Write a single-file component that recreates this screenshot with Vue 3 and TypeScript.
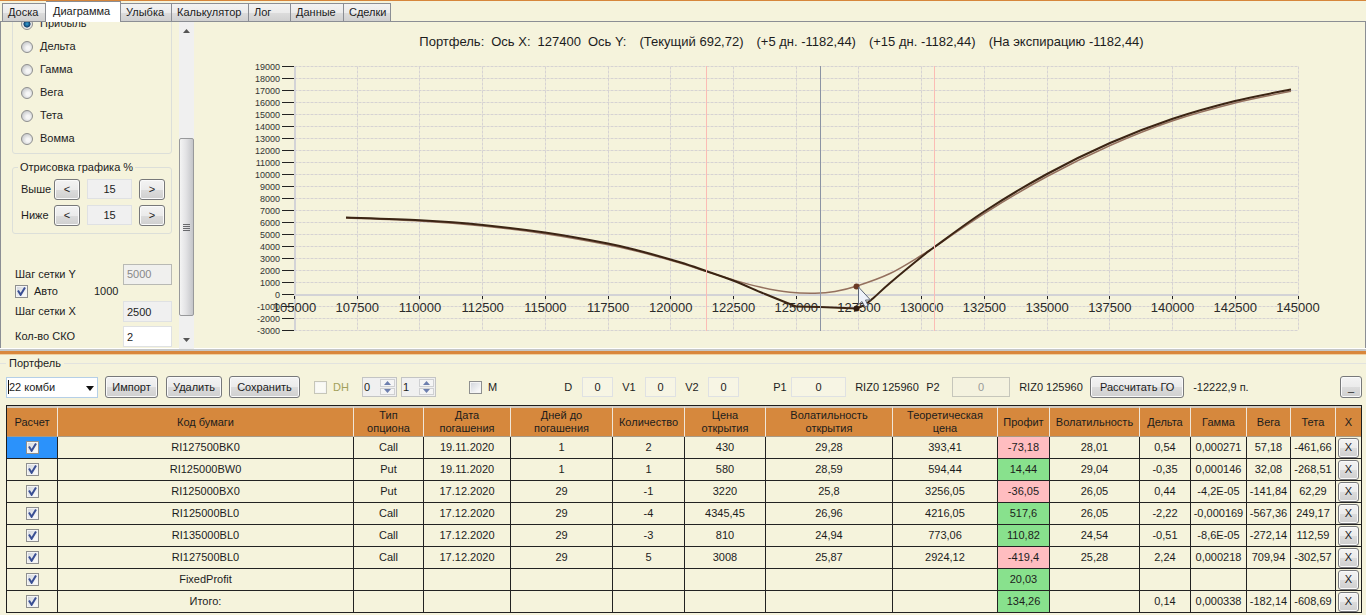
<script setup lang="ts">
import { ref } from 'vue'

type Point = [number, number]

interface Row {
  on: boolean
  code: string
  cells: string[]
}

const tabs = [
  { name: 'Доска', width: 44 },
  { name: 'Диаграмма', width: 75 },
  { name: 'Улыбка', width: 51 },
  { name: 'Калькулятор', width: 77 },
  { name: 'Лог', width: 42 },
  { name: 'Данные', width: 53 },
  { name: 'Сделки', width: 47 },
]
const activeTab = ref('Диаграмма')

const metrics = ['Прибыль', 'Дельта', 'Гамма', 'Вега', 'Тета', 'Вомма']
const metric = ref('Прибыль')
const ranges = [
  { id: 'above', name: 'Выше', value: '15' },
  { id: 'below', name: 'Ниже', value: '15' },
]
const auto = ref(true)
const hedge = ref(false)
const mFlag = ref(false)

const title = ['Портфель:', 'Ось X:', '127400', 'Ось Y:']
const titleValues = ['(Текущий 692,72)', '(+5 дн. -1182,44)', '(+15 дн. -1182,44)', '(На экспирацию -1182,44)']

const left = 294.5
const zeroY = 294.5
const px = (v: number) => left + ((v - 105000) / 40000) * 1003.5
const py = (v: number) => zeroY - (v / 1000) * 12
const xTicks = Array.from({ length: 17 }, (_, i) => 105000 + i * 2500)
const yTicks = Array.from({ length: 23 }, (_, i) => -3000 + i * 1000)
const snap = (v: number) => Math.floor(v) + 0.5

function curve(points: Point[]): string {
  let d = `M${points[0][0]} ${points[0][1]}`
  for (let i = 0; i < points.length - 1; i++) {
    const a = points[Math.max(0, i - 1)]
    const b = points[i]
    const c = points[i + 1]
    const e = points[Math.min(points.length - 1, i + 2)]
    d += ` C${b[0] + (c[0] - a[0]) / 6} ${b[1] + (c[1] - a[1]) / 6} ${c[0] - (e[0] - b[0]) / 6} ${c[1] - (e[1] - b[1]) / 6} ${c[0]} ${c[1]}`
  }
  return d
}

const expiry = [
  curve([[346, 217.5], [420, 220.3], [483, 225], [545, 232.5], [608, 243.5], [640, 251], [680, 262.3], [706, 271], [733, 280.5], [765, 294], [796, 306.5]]),
  'M796 306.5L820 307L857 308.5',
  curve([[857, 308.5], [866, 304], [874, 297.5], [890, 283], [922, 256.5], [934.5, 247], [985, 211], [1047, 174], [1110, 143], [1172, 119], [1235, 101], [1291, 89.5]]),
]
const current = curve([[346, 218], [420, 221], [483, 226], [545, 233.7], [608, 244.7], [640, 252], [680, 263], [706, 271.3], [733, 279.8], [760, 287], [790, 292.3], [815, 293.3], [835, 291.5], [857, 286], [890, 273.5], [922, 255], [934.5, 247], [985, 213], [1047, 176.5], [1110, 145.5], [1172, 121], [1235, 103], [1291, 91.3]])

const columns = [
  { name: ['Расчет'], width: 51 },
  { name: ['Код бумаги'], width: 296 },
  { name: ['Тип', 'опциона'], width: 70 },
  { name: ['Дата', 'погашения'], width: 87 },
  { name: ['Дней до', 'погашения'], width: 102 },
  { name: ['Количество'], width: 72 },
  { name: ['Цена', 'открытия'], width: 81 },
  { name: ['Волатильность', 'открытия'], width: 127 },
  { name: ['Теоретическая', 'цена'], width: 105 },
  { name: ['Профит'], width: 52 },
  { name: ['Волатильность'], width: 90 },
  { name: ['Дельта'], width: 51 },
  { name: ['Гамма'], width: 56 },
  { name: ['Вега'], width: 44 },
  { name: ['Тета'], width: 45 },
  { name: ['X'], width: 25 },
]
const totalWidth = columns.reduce((sum, c) => sum + c.width, 0)

const rows = ref<Row[]>([
  { on: true, code: 'RI127500BK0', cells: ['Call', '19.11.2020', '1', '2', '430', '29,28', '393,41', '-73,18', '28,01', '0,54', '0,000271', '57,18', '-461,66'] },
  { on: true, code: 'RI125000BW0', cells: ['Put', '19.11.2020', '1', '1', '580', '28,59', '594,44', '14,44', '29,04', '-0,35', '0,000146', '32,08', '-268,51'] },
  { on: true, code: 'RI125000BX0', cells: ['Put', '17.12.2020', '29', '-1', '3220', '25,8', '3256,05', '-36,05', '26,05', '0,44', '-4,2E-05', '-141,84', '62,29'] },
  { on: true, code: 'RI125000BL0', cells: ['Call', '17.12.2020', '29', '-4', '4345,45', '26,96', '4216,05', '517,6', '26,05', '-2,22', '-0,000169', '-567,36', '249,17'] },
  { on: true, code: 'RI135000BL0', cells: ['Call', '17.12.2020', '29', '-3', '810', '24,94', '773,06', '110,82', '24,54', '-0,51', '-8,6E-05', '-272,14', '112,59'] },
  { on: true, code: 'RI127500BL0', cells: ['Call', '17.12.2020', '29', '5', '3008', '25,87', '2924,12', '-419,4', '25,28', '2,24', '0,000218', '709,94', '-302,57'] },
  { on: true, code: 'FixedProfit', cells: ['', '', '', '', '', '', '', '20,03', '', '', '', '', ''] },
  { on: true, code: 'Итого:', cells: ['', '', '', '', '', '', '', '134,26', '', '0,14', '0,000338', '-182,14', '-608,69'] },
])
const profitColumn = 7

function profitClass(index: number, value: string): string {
  if (index !== profitColumn) return ''
  return value.startsWith('-') ? 'loss' : 'gain'
}
</script>

<template>
  <div class="app">
    <nav class="tabs" role="tablist">
      <button
        v-for="t in tabs"
        :key="t.name"
        type="button"
        role="tab"
        class="tab"
        :class="{ active: t.name === activeTab }"
        :aria-selected="t.name === activeTab"
        :style="{ width: t.width + 'px' }"
        @click="activeTab = t.name"
      >{{ t.name }}</button>
    </nav>

    <main class="diagram">
      <aside class="side">
        <div class="settings">
          <fieldset class="box metrics">
            <label v-for="m in metrics" :key="m" class="option">
              <input v-model="metric" type="radio" name="metric" :value="m">{{ m }}
            </label>
          </fieldset>

          <fieldset class="box ranges">
            <legend>Отрисовка графика %</legend>
            <div v-for="r in ranges" :key="r.id" class="range">
              <label :for="r.id">{{ r.name }}</label>
              <button type="button" class="btn step">&lt;</button>
              <input :id="r.id" class="field soft" type="text" readonly :value="r.value">
              <button type="button" class="btn step">&gt;</button>
            </div>
          </fieldset>

          <div class="grid-settings">
            <div class="line tight">
              <label for="step-y">Шаг сетки Y</label>
              <input id="step-y" class="field off" type="text" disabled value="5000">
            </div>
            <div class="line auto">
              <label class="check"><input v-model="auto" type="checkbox">Авто</label>
              <span>1000</span>
            </div>
            <div class="line">
              <label for="step-x">Шаг сетки X</label>
              <input id="step-x" class="field soft" type="text" readonly value="2500">
            </div>
            <div class="line">
              <label for="deviations">Кол-во СКО</label>
              <input id="deviations" class="field" type="text" value="2">
            </div>
          </div>
        </div>

        <div class="scroll" aria-hidden="true">
          <svg class="arrow" viewBox="0 0 15 16"><path d="M4 11L7.500 7L11 11Z" fill="#555" /></svg>
          <div class="track">
            <div class="thumb"><i></i><i></i><i></i><i></i></div>
          </div>
          <svg class="arrow" viewBox="0 0 15 16"><path d="M4 5L7.500 9L11 5Z" fill="#555" /></svg>
        </div>
      </aside>

      <section class="chart">
        <svg viewBox="194 22 1171 327" role="img" aria-label="Портфель">
          <g class="grid">
            <line v-for="y in yTicks" :key="'gy' + y" :x1="left" x2="1298" :y1="py(y)" :y2="py(y)" />
            <line v-for="x in xTicks" :key="'gx' + x" :x1="snap(px(x))" :x2="snap(px(x))" y1="66.5" y2="330.5" />
          </g>
          <g class="axis">
            <line x1="295" x2="295" y1="66" y2="331" />
            <line x1="294" x2="1298" y1="295" y2="295" />
          </g>
          <g class="ticks">
            <line v-for="y in yTicks" :key="'ty' + y" x1="282" x2="294" :y1="py(y)" :y2="py(y)" />
            <line v-for="x in xTicks" :key="'tx' + x" :x1="snap(px(x))" :x2="snap(px(x))" y1="296" y2="299" />
          </g>
          <g class="y-labels">
            <text v-for="y in yTicks" :key="'ly' + y" x="280" :y="py(y) + 3">{{ y }}</text>
          </g>
          <g class="x-labels">
            <text v-for="x in xTicks" :key="'lx' + x" :x="px(x)" y="312">{{ x }}</text>
          </g>
          <path class="current" :d="current" />
          <path v-for="d in expiry" :key="d" class="expiry" :d="d" />
          <line class="bound" x1="706.5" x2="706.5" y1="66" y2="331" />
          <line class="bound" x1="934.5" x2="934.5" y1="66" y2="331" />
          <line class="price" x1="820.5" x2="820.5" y1="66" y2="331" />
          <circle cx="856.500" cy="286.500" r="3" fill="#6b3a25" />
          <circle cx="856.500" cy="308.500" r="3" fill="#2e1b10" />
          <path d="M858.500 287V304.500L862 301.500L865 307L868 305.500L865.500 300H870.500Z" fill="#eef2fa" stroke="#5d6675" stroke-width="1" />
        </svg>
        <h1 class="title">
          <span v-for="t in title" :key="t">{{ t }}</span>
          <span v-for="t in titleValues" :key="t" class="value">{{ t }}</span>
        </h1>
      </section>
    </main>

    <div class="splitter"></div>

    <section class="portfolio">
      <h2 class="caption"><span>Портфель</span></h2>

      <div class="toolbar">
        <span class="combo">
          <select aria-label="Портфель"><option>22 комби</option></select>
          <svg viewBox="0 0 8 5"><path d="M0 0H8L4 5Z" fill="#111" /></svg>
        </span>
        <button type="button" class="btn import">Импорт</button>
        <button type="button" class="btn remove">Удалить</button>
        <button type="button" class="btn save">Сохранить</button>
        <label class="check hedge"><input v-model="hedge" type="checkbox" disabled>DH</label>
        <span v-for="n in ['0', '1']" :key="n" class="spin">
          <input type="text" readonly :value="n" :aria-label="'DH ' + n">
          <span class="arrows">
            <button type="button" aria-label="+"><svg viewBox="0 0 7 4"><path d="M0 4L3.500 0L7 4Z" fill="#6d7fae" /></svg></button>
            <button type="button" aria-label="-"><svg viewBox="0 0 7 4"><path d="M0 0L3.500 4L7 0Z" fill="#6d7fae" /></svg></button>
          </span>
        </span>
        <label class="check m-flag"><input v-model="mFlag" type="checkbox">M</label>
        <label class="d-label" for="d">D</label>
        <input id="d" class="field num" type="text" value="0">
        <label class="v-label" for="v1">V1</label>
        <input id="v1" class="field num" type="text" value="0">
        <label class="v-label" for="v2">V2</label>
        <input id="v2" class="field num" type="text" value="0">
        <label class="p-label" for="p1">P1</label>
        <input id="p1" class="field num wide" type="text" value="0">
        <span class="ticker">RIZ0 125960</span>
        <label class="p2-label" for="p2">P2</label>
        <input id="p2" class="field num wide dim" type="text" disabled value="0">
        <span class="ticker">RIZ0 125960</span>
        <button type="button" class="btn margin">Рассчитать ГО</button>
        <span class="total">-12222,9 п.</span>
        <button type="button" class="btn fold">_</button>
      </div>

      <table class="positions">
        <colgroup>
          <col v-for="(c, i) in columns" :key="i" :style="{ width: (c.width / totalWidth) * 100 + '%' }">
        </colgroup>
        <thead>
          <tr>
            <th v-for="(c, i) in columns" :key="i" scope="col">
              <div v-for="w in c.name" :key="w">{{ w }}</div>
            </th>
          </tr>
        </thead>
        <tbody>
          <tr v-for="(r, i) in rows" :key="r.code">
            <td :class="{ selected: i === 0 }"><input v-model="r.on" type="checkbox" :aria-label="r.code"></td>
            <td>{{ r.code }}</td>
            <td v-for="(c, j) in r.cells" :key="j" :class="profitClass(j, c)">{{ c }}</td>
            <td class="last"><button type="button" class="btn close">X</button></td>
          </tr>
        </tbody>
      </table>
    </section>
  </div>
</template>

<style>
body {
  margin: 0;
  background: #f5f3dc;
}
</style>

<style scoped>
.app {
  min-height: 100vh;
  box-sizing: border-box;
  background: #f5f3dc;
  border-top: 1px solid #d6863b;
  color: #1c1c1c;
  font: 11px/13px "Liberation Sans", Arial, sans-serif;
  overflow: hidden;
}
button, input, select {
  box-sizing: border-box;
  margin: 0;
  font: inherit;
  color: inherit;
}
.tabs {
  display: flex;
  align-items: flex-end;
  height: 21px;
  padding-left: 2px;
  border-bottom: 1px solid #8b8e94;
  box-sizing: border-box;
}
.tab {
  flex: none;
  height: 18px;
  padding: 0 0 0 5px;
  border: 1px solid #8b8e94;
  border-left-width: 0;
  border-bottom: 0;
  background: linear-gradient(#f3f3f3 0, #ebebeb 50%, #dcdcdc 51%, #d0d0d0 100%);
  text-align: left;
  white-space: nowrap;
}
.tab:first-child {
  border-left-width: 1px;
}
.tab.active {
  height: 21px;
  margin-bottom: -1px;
  padding: 0 0 2px 7px;
  background: #fff;
}
.diagram {
  display: flex;
  height: 327px;
  border-left: 1px solid #8b8e94;
  border-right: 1px solid #8b8e94;
}
.side {
  display: flex;
  flex: none;
  width: 193px;
  overflow: hidden;
}
.settings {
  display: flex;
  flex: 1;
  flex-direction: column;
  justify-content: flex-end;
  padding-left: 11px;
  box-sizing: border-box;
}
.settings > * {
  flex: none;
}
.box {
  min-width: 0;
  width: 160px;
  margin: 0;
  padding: 0;
  box-sizing: border-box;
  border: 1px solid #dcdfd9;
  border-radius: 3px;
}
.metrics {
  padding: 0 0 3px 8px;
}
.option {
  display: flex;
  align-items: center;
  gap: 7px;
  height: 23px;
}
input[type="radio"] {
  appearance: none;
  flex: none;
  width: 12px;
  height: 12px;
  border: 1px solid #8e8f8f;
  border-radius: 50%;
  background: radial-gradient(circle at 60% 60%, #f6f6f6 20%, #c9cbcd 75%);
}
input[type="radio"]:checked {
  background: radial-gradient(circle, #35a4d8 0, #123e6b 45%, #e8e8e8 55%);
}
input[type="checkbox"] {
  appearance: none;
  flex: none;
  width: 13px;
  height: 13px;
  border: 1px solid #8e8f8f;
  background: linear-gradient(135deg, #cfd3da, #f8f8f8 80%);
  box-shadow: inset 0 0 0 1px #f4f4f4;
}
input[type="checkbox"]:checked {
  background: url("data:image/svg+xml,%3Csvg xmlns='http://www.w3.org/2000/svg' viewBox='0 0 11 11'%3E%3Cpath d='M2 4.500L4.600 8.800L9 1.500' fill='none' stroke='%233a4f94' stroke-width='2'/%3E%3C/svg%3E"), linear-gradient(135deg, #cfd3da, #f8f8f8 80%);
}
.ranges {
  height: 73px;
  margin-top: 7px;
}
.ranges legend {
  margin-left: 5px;
  padding: 0 2px;
}
.range {
  display: flex;
  align-items: center;
  height: 22px;
  margin: 4px 0 0 8px;
}
.range label {
  width: 33px;
}
.range .field {
  width: 45px;
  height: 20px;
  margin: 0 7px;
  text-align: center;
}
.btn {
  padding: 0;
  border: 1px solid #77787a;
  border-radius: 3px;
  background: linear-gradient(#f3f3f3 0, #ebebeb 50%, #dcdcdc 51%, #cfcfcf 100%);
  box-shadow: inset 0 0 0 1px #fafafa;
  text-align: center;
  white-space: nowrap;
}
.step {
  width: 26px;
  height: 21px;
}
.field {
  padding: 0 3px;
  border: 1px solid #dfe1e3;
  background: #fff;
}
.field.soft {
  background: #f0f0f0;
}
.field.off {
  border-color: #b8b9b4;
  background: #f0f0ee;
  color: #888;
}
.grid-settings {
  padding: 30px 7px 0 3px;
}
.line {
  display: flex;
  align-items: center;
  justify-content: space-between;
  height: 25px;
}
.line.tight {
  height: 20px;
}
.line .field {
  width: 49px;
  height: 21px;
}
.line.auto {
  justify-content: flex-start;
  height: 15px;
}
.line.auto .check {
  width: 79px;
}
.check {
  display: flex;
  align-items: center;
  gap: 6px;
}
.scroll {
  display: flex;
  flex: none;
  flex-direction: column;
  width: 15px;
  background: #f0f0f0;
}
.arrow {
  flex: none;
  width: 15px;
  height: 16px;
}
.track {
  display: flex;
  flex: 1;
  flex-direction: column;
  justify-content: flex-end;
  padding-bottom: 17px;
}
.thumb {
  display: flex;
  flex-direction: column;
  align-items: center;
  justify-content: center;
  gap: 1px;
  height: 64%;
  box-sizing: border-box;
  border: 1px solid #98999b;
  border-radius: 2px;
  background: linear-gradient(90deg, #f4f4f4, #e3e3e5 45%, #c4c5c9);
}
.thumb i {
  width: 7px;
  height: 1px;
  background: #68696d;
}
.chart {
  display: grid;
  flex: 1;
  min-width: 0;
}
.chart > * {
  grid-area: 1 / 1;
}
.chart svg {
  width: 100%;
  height: 327px;
}
.title {
  display: flex;
  align-self: start;
  justify-content: center;
  gap: 7px;
  margin: 12px 0 0;
  padding-left: 4px;
  font-size: 13px;
  font-weight: 400;
  line-height: 16px;
  white-space: nowrap;
}
.title .value {
  margin-left: 6px;
}
.grid line {
  stroke: #d6d3d3;
  stroke-dasharray: 3 1;
}
.axis line {
  stroke: #d3d3d6;
  stroke-width: 2;
}
.ticks line {
  stroke: #222;
}
.y-labels text {
  fill: #333;
  font-size: 9px;
  text-anchor: end;
}
.x-labels text {
  fill: #2a2a2a;
  font-size: 13px;
  text-anchor: middle;
}
.current, .expiry {
  fill: none;
}
.current {
  stroke: #94705e;
  stroke-width: 1.5;
}
.expiry {
  stroke: #3b2413;
  stroke-width: 2;
}
.bound {
  stroke: #fbbcb4;
}
.price {
  stroke: #8b93a3;
}
.splitter {
  height: 3px;
  border-top: 2px solid #c5c6c6;
  border-bottom: 1px solid #efcf9f;
  background: #d9873c;
  box-shadow: 0 -1px #fff;
}
.portfolio {
  padding: 1px 4px 0 6px;
}
.caption {
  display: flex;
  align-items: center;
  margin: 0 -4px 0 -6px;
  font-size: 11px;
  font-weight: 400;
  line-height: 14px;
}
.caption span {
  padding: 0 3px;
}
.caption::before, .caption::after {
  content: "";
  width: 6px;
  height: 1px;
  background: #e2e3df;
}
.caption::after {
  flex: 1;
}
.toolbar {
  display: flex;
  align-items: center;
  height: 24px;
  margin: 5px 0 6px;
  white-space: nowrap;
}
.toolbar > * {
  flex: none;
  box-sizing: border-box;
}
.toolbar .btn {
  height: 22px;
}
.combo {
  position: relative;
  width: 92px;
  height: 21px;
}
.combo select {
  appearance: none;
  width: 100%;
  height: 100%;
  padding: 0 3px 0 2px;
  border: 1px solid #b5cfe7;
  border-radius: 0;
  background: #fff;
}
.combo::before {
  content: "";
  position: absolute;
  left: 2px;
  top: 3px;
  width: 1px;
  height: 14px;
  background: #111;
}
.combo svg {
  position: absolute;
  right: 4px;
  top: 9px;
  width: 8px;
  height: 5px;
}
.import { width: 53px; margin-left: 7px; }
.remove { width: 56px; margin-left: 8px; }
.save { width: 71px; margin-left: 7px; }
.hedge {
  width: 48px;
  margin-left: 14px;
  color: #a3a05a;
}
.hedge input {
  border-color: #c6c6b8;
  background: #fafaf4;
}
.spin {
  display: flex;
  width: 35px;
  height: 20px;
  margin-right: 4px;
  border: 1px solid #c3c4c4;
  background: #f0f0f0;
}
.spin input {
  width: 16px;
  padding: 0 0 0 1px;
  border: 0;
  background: none;
}
.spin .arrows {
  display: flex;
  flex: 1;
  flex-direction: column;
  gap: 1px;
  padding: 1px;
}
.spin button {
  display: flex;
  flex: 1;
  align-items: center;
  justify-content: center;
  padding: 0;
  border: 1px solid #cfd0d2;
  background: #f5f5f5;
}
.spin svg {
  width: 7px;
  height: 4px;
}
.m-flag { margin-left: 29px; }
.d-label { width: 18px; margin-left: 67px; }
.v-label { width: 23px; margin-left: 9px; }
.p-label { width: 18px; margin-left: 34px; }
.p2-label { width: 26px; margin-left: 7px; }
.num {
  width: 31px;
  height: 20px;
  background: #f7f5e4;
  text-align: center;
}
.num.wide { width: 55px; }
.num.dim {
  width: 58px;
  border-color: #c6c6bb;
  background: #f4f2df;
  color: #999;
}
.ticker {
  width: 64px;
  margin-left: 9px;
}
.margin { width: 94px; margin-left: 7px; }
.total { margin-left: 9px; }
.fold { width: 22px; margin-left: auto; }
.positions {
  width: 100%;
  table-layout: fixed;
  border-collapse: separate;
  border-spacing: 0;
  border: 1px solid #1d1d1d;
  border-bottom: 0;
}
.positions th {
  height: 31px;
  padding: 0;
  border-top: 2px solid #d2cabf;
  border-right: 1px solid #f0e6d8;
  border-bottom: 1px solid #a89a85;
  box-sizing: border-box;
  background: #d6883d;
  font-weight: 400;
  line-height: 13px;
  white-space: nowrap;
}
.positions td {
  height: 22px;
  padding: 0;
  border-right: 1px solid #222;
  border-bottom: 1px solid #222;
  box-sizing: border-box;
  text-align: center;
  white-space: nowrap;
}
.positions th:last-child, .positions td.last {
  border-right: 0;
}
.positions td input {
  display: block;
  margin: 0 auto;
}
.positions td.selected { background: #2b92fb; }
.positions td.loss { background: #ffbdc0; }
.positions td.gain { background: #88e18d; }
.close {
  display: block;
  width: 21px;
  height: 20px;
  margin: 0 auto;
}
</style>
